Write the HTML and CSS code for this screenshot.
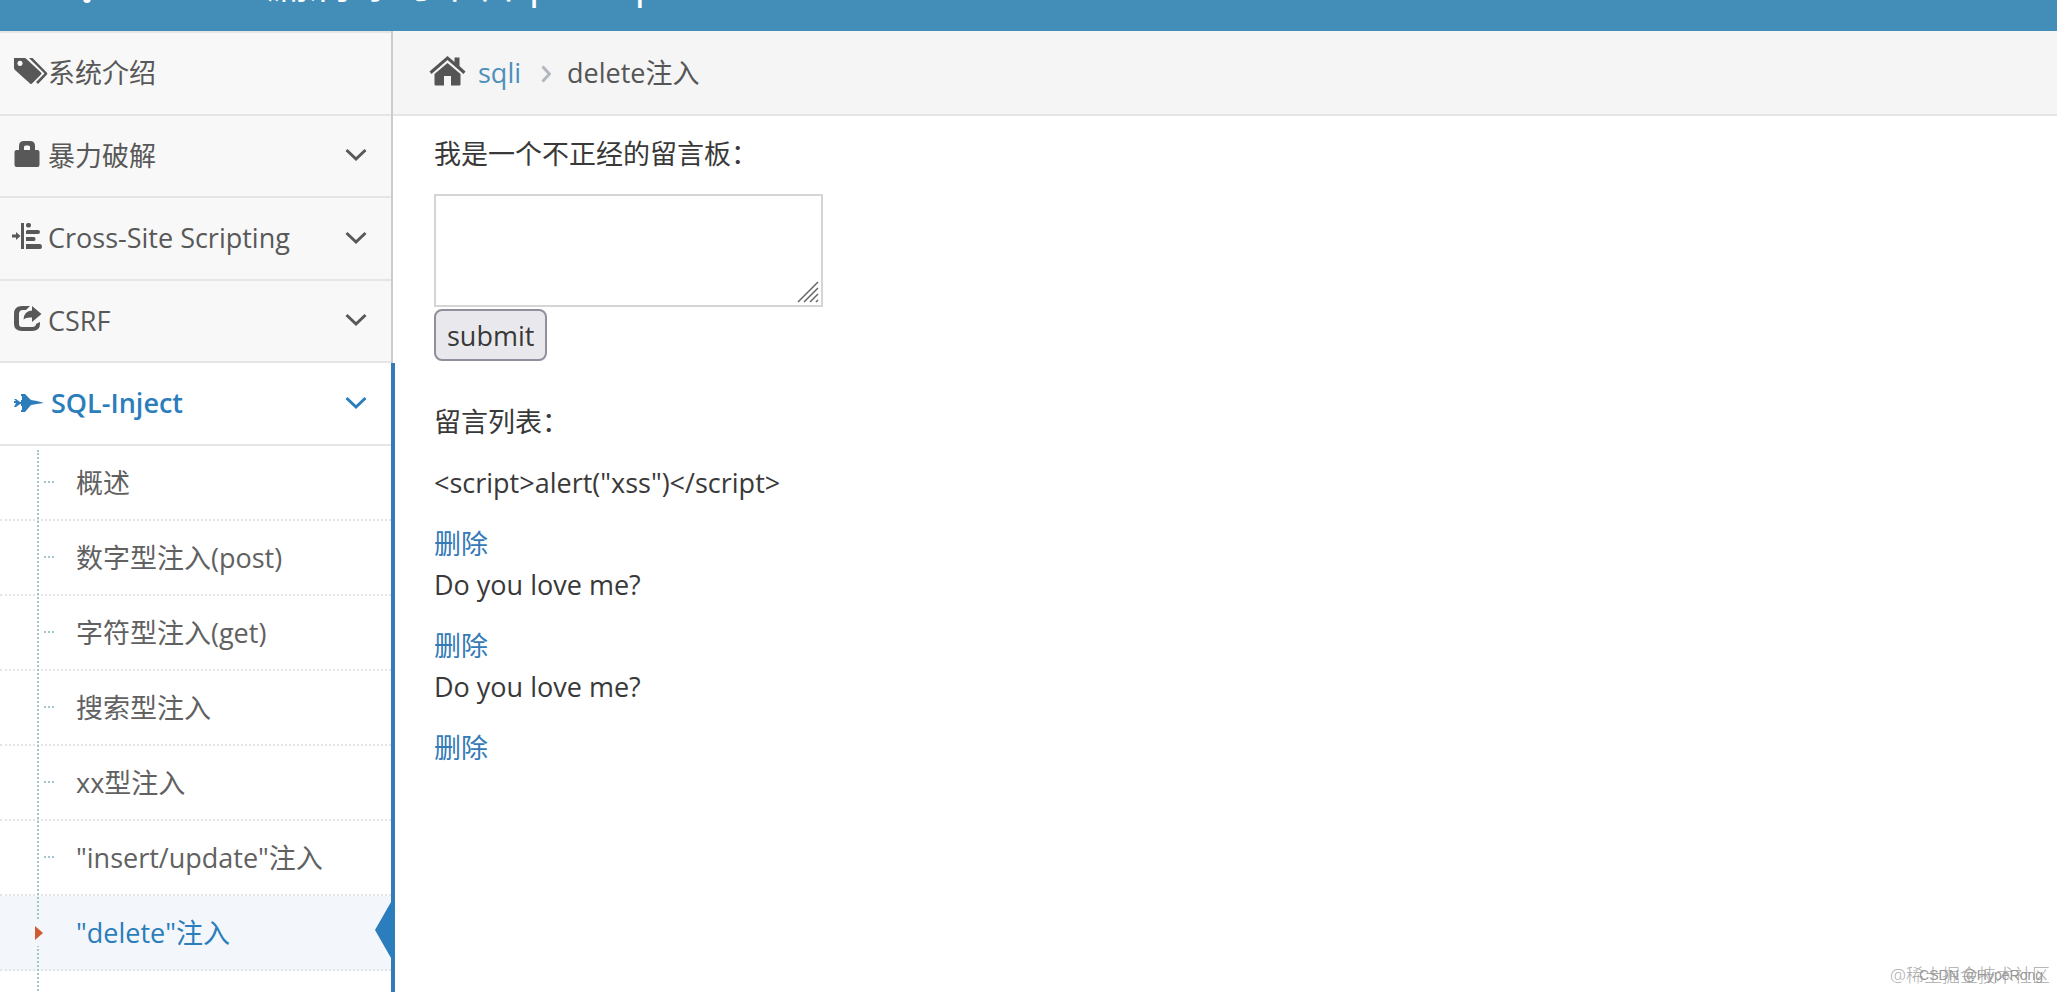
FILE: index.html
```html
<!DOCTYPE html>
<html lang="zh-CN">
<head>
<meta charset="utf-8">
<title>delete注入</title>
<link rel="stylesheet" href="styles.css">
</head>
<body>
<header class="navbar">
  <a class="brand" href="#">
    <svg class="brand-icon" viewBox="0 0 23 42"><path d="M5 41 2 33V8L8 2l6 6v25l-3 8q-3 2-6 0z" fill="currentColor"/></svg>
    <span>Pikachu 漏洞练习平台 pika~pika~</span>
  </a>
</header>
<div class="layout">
  <nav class="sidebar">
    <ul class="menu">
      <li class="item">
        <a class="link" href="#">
          <svg class="icon wide" viewBox="0 0 34 28"><path fill="currentColor" fill-rule="evenodd" d="M0 1h10.500q1 0 2 1L27 15.500q1 1 0 2L18 26.500q-1 1-2 0L1 13Q0 12 0 10.500zM6 3.800a2.600 2.600 0 1 0 .01 0zM15 1h3.500L33 15.800q.8.900 0 1.800L24 27l-2-2 8.500-8.500z"/></svg>
          <span>系统介绍</span>
        </a>
      </li>
      <li class="item">
        <a class="link" href="#">
          <svg class="icon" viewBox="0 0 28 28"><path fill="currentColor" fill-rule="evenodd" d="M5 10V6q0-5 5-5h6q5 0 5 5v4h2.500q2 0 2 2v13q0 2-2 2H2.500q-2 0-2-2V12q0-2 2-2zm5 0h6V7q0-1.500-1.500-1.500h-3Q10 5.500 10 7z"/></svg>
          <span>暴力破解</span>
          <svg class="arrow" viewBox="0 0 22 14"><path d="M1.500 2 11 11l9.500-9"/></svg>
        </a>
      </li>
      <li class="item">
        <a class="link" href="#">
          <svg class="icon shifted" viewBox="0 0 32 28"><path fill="currentColor" d="M9 1h3v26H9zM0 12.500h4V10l4.500 4L4 18v-2.500H0zM16 1h1q2 0 2 2v.5q0 2-2 2h-1q-2 0-2-2V3q0-2 2-2zM15 8h11q2 0 2 2t-2 2H14V9zM14 15h8q1.500 0 1.500 2T22 19h-8zM14 22h14q2 0 2 2.500T28 27H14z"/></svg>
          <span>Cross-Site Scripting</span>
          <svg class="arrow" viewBox="0 0 22 14"><path d="M1.500 2 11 11l9.500-9"/></svg>
        </a>
      </li>
      <li class="item">
        <a class="link" href="#">
          <svg class="icon" viewBox="0 0 28 28"><path fill="currentColor" d="M16 1H8Q0 1 0 9v10q0 7 8 7h10q8 0 8-7v-2l-4 2q0 3-4 3H8q-3 0-3-3V9q0-4 4-4h3zM18 1l9.500 8L18 17v-4.500q-6-.5-8.500 2Q10 6 18 5.500z"/></svg>
          <span>CSRF</span>
          <svg class="arrow" viewBox="0 0 22 14"><path d="M1.500 2 11 11l9.500-9"/></svg>
        </a>
      </li>
      <li class="item open">
        <a class="link" href="#">
          <svg class="icon jet" viewBox="0 0 30 28"><path fill="currentColor" d="M0 10h2l4 3h1v-2h1V7H7V5h4l6 6 6 1 7 2-7 1-6 1-6 7H7v-2h1v-4H7v-2H6l-4 3H0l2-4H0v-2h2z"/></svg>
          <span>SQL-Inject</span>
          <svg class="arrow" viewBox="0 0 22 14"><path d="M1.500 2 11 11l9.500-9"/></svg>
        </a>
        <ul class="submenu">
          <li class="sub"><a href="#">概述</a></li>
          <li class="sub"><a href="#">数字型注入(post)</a></li>
          <li class="sub"><a href="#">字符型注入(get)</a></li>
          <li class="sub"><a href="#">搜索型注入</a></li>
          <li class="sub"><a href="#">xx型注入</a></li>
          <li class="sub"><a href="#">"insert/update"注入</a></li>
          <li class="sub active">
            <a href="#">"delete"注入</a>
            <svg class="caret" viewBox="0 0 9 26"><path fill="#f3f6fa" d="M0 0h9v26H0z"/><path fill="#cf5b32" d="M1 6v14l8-7z"/></svg>
            <svg class="pointer" viewBox="0 0 20 56"><path fill="currentColor" d="M20 0h-4L0 28l16 28h4z"/></svg>
          </li>
        </ul>
      </li>
    </ul>
  </nav>
  <main class="main">
    <nav class="breadcrumb">
      <svg class="home" viewBox="0 0 36 30"><path fill="currentColor" d="M18 7 31 18v10.500q0 1-1 1h-8.500V20h-7v9.500H6q-1 0-1-1V18zM18 0l7 6V1.500h5V10l6 5.500-2 2.500L18 4 2 18l-2-2.500z"/></svg>
      <a href="#">sqli</a>
      <svg class="sep" viewBox="0 0 10 18"><path d="m1.500 1.500 7 7.500-7 7.500"/></svg>
      <span>delete注入</span>
    </nav>
    <section class="content">
      <form class="board">
        <label class="text" for="message">我是一个不正经的留言板：</label>
        <div class="field">
          <textarea class="message" id="message"></textarea>
          <svg class="grip" viewBox="0 0 22 22"><path d="M1 21 21 1M7 21 21 7M13 21l8-8M19 21l2-2"/></svg>
        </div>
        <button class="submit" type="button">submit</button>
      </form>
      <p class="text">留言列表：</p>
      <p class="text">&lt;script&gt;alert("xss")&lt;/script&gt;</p>
      <a class="delete" href="#">删除</a>
      <p class="text">Do you love me?</p>
      <a class="delete" href="#">删除</a>
      <p class="text">Do you love me?</p>
      <a class="delete" href="#">删除</a>
    </section>
  </main>
</div>
<div class="mark">@稀土掘金技术社区</div>
<div class="mark small">CSDN @HypeRong</div>
</body>
</html>
```
FILE: styles.css
```css
* { box-sizing: border-box; }

html { height: 100%; overflow: hidden; }

body {
  margin: 0;
  height: 100%;
  overflow: hidden;
  display: flex;
  flex-direction: column;
  background: #fff;
  color: #393939;
  font: 27px/41px "Open Sans", "Noto Sans CJK SC", sans-serif;
}

a { color: #337ab7; text-decoration: none; }
ul { list-style: none; margin: 0; padding: 0; }

/* The bar is scrolled mostly out of view. */
.navbar {
  flex: none;
  height: 93px;
  margin-top: -62px;
  padding: 0 0 6px 79px;
  display: flex;
  align-items: center;
  background: #438eb9;
}
.brand {
  display: flex;
  align-items: center;
  color: #fff;
  font-size: 42px;
  white-space: nowrap;
}
.brand-icon { width: 23px; height: 42px; }

.layout { flex: 1; display: flex; min-height: 0; overflow: hidden; }

.sidebar {
  flex: none;
  width: 395px;
  background: linear-gradient(#ccc, #ccc) 391px 0 / 2px 100% no-repeat;
}
.menu { display: flex; flex-direction: column; height: 100%; }
.item { flex: none; }
.link {
  display: flex;
  align-items: center;
  width: 391px;
  height: 83px;
  padding: 0 24px 2px 14px;
  border-bottom: 2px solid #e5e5e5;
  background: #f8f8f8;
  color: #585858;
}
.item:first-child .link { height: 85px; border-top: 2px solid #e5e5e5; }
.item:nth-child(even) .link { height: 82px; }
.icon { flex: none; width: 28px; height: 28px; margin: 0 6px 3px 0; }
.icon.wide { width: 34px; margin-right: 0; }
.icon.shifted { width: 32px; margin-left: -2px; margin-right: 4px; }
.icon.jet { width: 30px; margin-right: 7px; margin-bottom: 0; }
.arrow { width: 22px; height: 14px; margin-left: auto; }
.arrow path, .sep path {
  fill: none;
  stroke: currentColor;
  stroke-width: 3;
}

.open { flex: 1; min-height: 0; border-right: 4px solid #337ab7; background: #fff; }
.open .link { background: #fff; color: #2b7dbc; font-weight: 600; }

.submenu { position: relative; padding-bottom: 20px; }
.submenu::before {
  content: "";
  position: absolute;
  z-index: 1;
  top: 4px;
  bottom: 0;
  left: 37px;
  border-left: 2px dotted #a3c4c8;
}
.sub {
  position: relative;
  display: flex;
  align-items: center;
  height: 75px;
  padding: 0 0 0 76px;
  border-bottom: 2px dotted #e4e4e4;
}
.sub a { color: #616161; }
.sub::before {
  content: "";
  position: absolute;
  top: 35px;
  left: 44px;
  width: 10px;
  border-top: 2px dotted #a3c4c8;
}
.sub.active { background: #f3f6fa; }
.sub.active::before { display: none; }
.sub.active a { color: #2b7dbc; }
.caret { position: absolute; z-index: 2; top: 24px; left: 34px; width: 9px; height: 26px; }
.pointer { position: absolute; top: 6px; right: -4px; width: 20px; height: 56px; color: #2b7dbc; }

.main { flex: 1; min-width: 0; }
.breadcrumb {
  display: flex;
  align-items: center;
  height: 85px;
  margin-left: -2px;
  padding: 0 0 0 36px;
  border-bottom: 2px solid #e5e5e5;
  background: #f5f5f5;
  color: #555;
}
.breadcrumb a { color: #4c8fbd; }
.home { width: 37px; height: 30px; margin: 0 12px 4px 0; }
.sep { width: 10px; height: 18px; margin: 2px 16px 0 20px; color: #b2b6bf; }

.content { padding: 17px 39px; }
.board { display: flex; flex-direction: column; align-items: flex-start; margin-bottom: 40px; }
.text { margin: 0 0 20px; }
.field { position: relative; margin-bottom: 2px; }
.message {
  display: block;
  width: 389px;
  height: 113px;
  border: 2px solid #d5d5d5;
  background: #fff;
  resize: none;
}
.grip { position: absolute; right: 4px; bottom: 4px; width: 22px; height: 22px; }
.grip path { stroke: #666; stroke-width: 1.5; }
.submit {
  height: 52px;
  padding: 0 11px;
  border: 2px solid #8f8f9d;
  border-radius: 8px;
  background: #e9e9ed;
  color: #393939;
  font: inherit;
}
.delete { display: block; width: max-content; }

.mark {
  position: absolute;
  right: 7px;
  bottom: 5px;
  color: #aaa;
  font-size: 18px;
  font-weight: 300;
  line-height: 24px;
}
.mark.small {
  right: 14px;
  color: #999;
  font-family: "Liberation Sans", sans-serif;
  font-size: 14px;
  font-weight: 400;
}
```
